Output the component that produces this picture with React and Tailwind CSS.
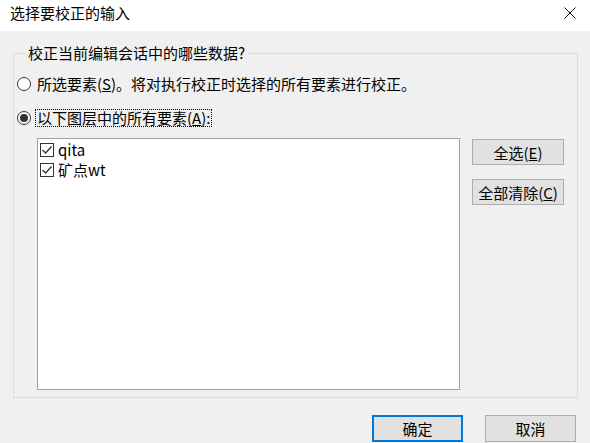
import React from "react";

const font = "font-['Microsoft_YaHei','Noto_Sans_CJK_SC',sans-serif]";

function Radio({ checked }) {
  return (
    <span className="w-[14px] h-[14px] rounded-full border border-[#333] bg-white flex items-center justify-center shrink-0">
      {checked && <span className="w-[8px] h-[8px] rounded-full bg-[#333]" />}
    </span>
  );
}

function Check() {
  return (
    <span className="w-[14px] h-[14px] border border-[#333] bg-white flex items-center justify-center shrink-0">
      <svg width="12" height="12" viewBox="0 0 12 12">
        <path d="M1.5 6 L4.6 9 L10.5 2.5" fill="none" stroke="#333" strokeWidth="1.3" />
      </svg>
    </span>
  );
}

function Button({ children, primary, className = "" }) {
  return (
    <button
      className={
        "h-[26px] bg-[#e1e1e1] text-[15px] leading-none text-black flex items-center justify-center " +
        (primary ? "border-2 border-[#0078d7] " : "border border-[#adadad] ") +
        className
      }
    >
      {children}
    </button>
  );
}

export default function App() {
  return (
    <div className={"w-[590px] h-[443px] bg-[#f0f0f0] overflow-hidden text-black " + font}>
      {/* title bar */}
      <div className="h-[31px] bg-white flex items-center justify-between pl-[10px] pr-[14px] pb-[5px]">
        <span className="text-[15px]">选择要校正的输入</span>
        <svg width="12" height="12" viewBox="0 0 12 12">
          <path d="M0.5 0.5 L11.5 11.5 M11.5 0.5 L0.5 11.5" stroke="#111" strokeWidth="1" />
        </svg>
      </div>

      <div className="pl-[13px] pr-[12px] pt-[12px]">
        <fieldset className="border border-[#dcdcdc] h-[355px] pl-[3px]">
          <legend className="ml-[8px] px-[3px] text-[15px] leading-[20px]">
            校正当前编辑会话中的哪些数据?
          </legend>

          <div className="mt-[11px] h-[20px] flex items-center gap-[6px] text-[15px]">
            <Radio />
            <span>
              所选要素(<u>S</u>)。将对执行校正时选择的所有要素进行校正。
            </span>
          </div>

          <div className="mt-[14px] h-[20px] flex items-center gap-[4px] text-[15px]">
            <Radio checked />
            <span className="border border-dotted border-black leading-[16px] px-[1px]">
              以下图层中的所有要素(<u>A</u>):
            </span>
          </div>

          <div className="mt-[10px] ml-[20px] flex">
            <div className="w-[423px] h-[252px] bg-white border border-[#a0a0a0] pl-[2px] text-[15px]">
              <div className="h-[20px] mt-[1px] flex items-center gap-[4px]">
                <Check />
                <span>qita</span>
              </div>
              <div className="h-[20px] flex items-center gap-[4px]">
                <Check />
                <span>矿点wt</span>
              </div>
            </div>
            <div className="ml-[12px] mt-[1px] flex flex-col gap-[14px]">
              <Button className="w-[92px]">
                全选(<u>E</u>)
              </Button>
              <Button className="w-[92px]">
                全部清除(<u>C</u>)
              </Button>
            </div>
          </div>
        </fieldset>

        <div className="mt-[17px] flex justify-end gap-[22px] pr-[2px]">
          <Button primary className="w-[91px] h-[27px]">确定</Button>
          <Button className="w-[91px] h-[27px]">取消</Button>
        </div>
      </div>
    </div>
  );
}
